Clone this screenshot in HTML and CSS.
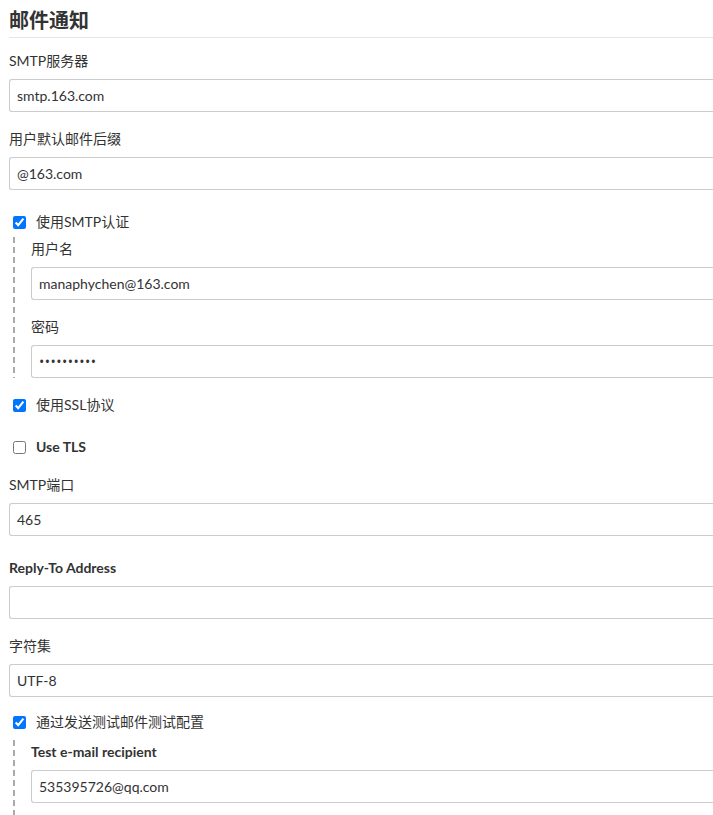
FILE: index.html
```html
<!DOCTYPE html>
<html lang="zh">
<head>
<meta charset="utf-8">
<title>邮件通知</title>
<link rel="stylesheet" href="styles.css">
</head>
<body>
<div class="page">
  <h1 class="title">邮件通知</h1>

  <div class="field first">
    <label class="label">SMTP服务器</label>
    <input class="input" type="text" value="smtp.163.com">
  </div>

  <div class="field gap-s">
    <label class="label">用户默认邮件后缀</label>
    <input class="input" type="text" value="@163.com">
  </div>

  <label class="check gap-l"><input type="checkbox" checked><span>使用SMTP认证</span></label>
  <div class="nested nested-auth">
    <div class="field">
      <label class="label">用户名</label>
      <input class="input" type="text" value="manaphychen@163.com">
    </div>
    <div class="field gap-m">
      <label class="label">密码</label>
      <input class="input password" type="password" value="aaaaaaaaaa">
    </div>
  </div>

  <label class="check gap-s"><input type="checkbox" checked><span>使用SSL协议</span></label>
  <label class="check gap-l"><input type="checkbox"><span class="bold">Use TLS</span></label>

  <div class="field gap-sm">
    <label class="label">SMTP端口</label>
    <input class="input" type="text" value="465">
  </div>

  <div class="field gap-l">
    <label class="label bold">Reply-To Address</label>
    <input class="input" type="text" value="">
  </div>

  <div class="field gap-s">
    <label class="label">字符集</label>
    <input class="input" type="text" value="UTF-8">
  </div>

  <label class="check gap-xs"><input type="checkbox" checked><span>通过发送测试邮件测试配置</span></label>
  <div class="nested nested-test">
    <div class="field">
      <label class="label bold">Test e-mail recipient</label>
      <input class="input" type="text" value="535395726@qq.com">
    </div>
  </div>
</div>
</body>
</html>
```

FILE: styles.css
```css
html, body {
  margin: 0;
  padding: 0;
  background: #fff;
  overflow: hidden;
}
body {
  font-family: "Lato", "Noto Sans CJK SC", sans-serif;
  font-size: 14px;
  color: #333;
}
.page {
  box-sizing: border-box;
  width: 713px;
  padding-left: 9px;
  display: flex;
  flex-direction: column;
}
.title {
  margin: 6px 0 0 0;
  font-size: 20px;
  line-height: 28px;
  font-weight: 700;
  padding-bottom: 3px;
  border-bottom: 1px solid #e5e5e5;
  color: #333;
}
.field {
  display: flex;
  flex-direction: column;
}
.label {
  display: block;
  line-height: 20px;
  margin-bottom: 8px;
  color: #333;
}
.bold {
  font-weight: 700;
}
.input {
  box-sizing: border-box;
  height: 33px;
  width: 100%;
  margin: 0;
  border: 1px solid #ccc;
  border-right: 0;
  border-radius: 3px 0 0 3px;
  padding: 0 7px;
  font-family: "Lato", "Noto Sans CJK SC", sans-serif;
  font-size: 14px;
  color: #333;
  background: #fff;
}
.password {
  font-family: "Open Sans", sans-serif;
  letter-spacing: 0.5px;
}
.first { margin-top: 13px; }
.gap-xs { margin-top: 15px; }
.gap-s { margin-top: 17px; }
.gap-sm { margin-top: 18px; }
.gap-m { margin-top: 17px; }
.gap-l { margin-top: 22px; }
.check {
  display: flex;
  align-items: center;
  height: 20px;
  line-height: 20px;
  color: #333;
}
.check input {
  width: 13px;
  height: 13px;
  margin: 0 10px 0 4px;
  accent-color: #0075ff;
}
.nested {
  margin-left: 4px;
  padding-left: 18px;
  padding-top: 2px;
  background-image: repeating-linear-gradient(to bottom, #aaa 0 6px, transparent 6px 10px);
  background-size: 2px 100%;
  background-repeat: no-repeat;
  background-position: left top;
}
.nested-auth { margin-top: 5px; }
.nested-test { margin-top: 8px; padding-bottom: 40px; }
```
